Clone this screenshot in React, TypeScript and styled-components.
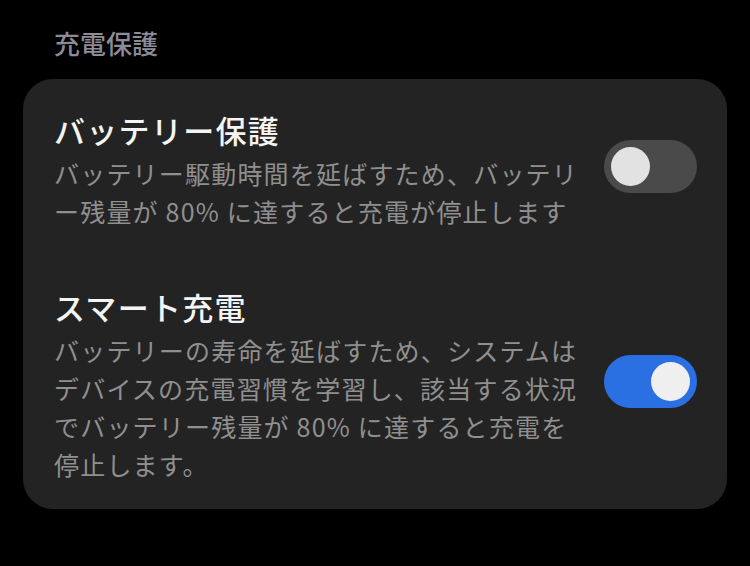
import { createGlobalStyle } from "styled-components";
import styled from "styled-components";

const GlobalStyle = createGlobalStyle`
	html, body
	{
		margin: 0;
		padding: 0;
		background-color: #000000;
	}

	body
	{
		font-family: "Noto Sans CJK JP", "Noto Sans", sans-serif;
		-webkit-font-smoothing: antialiased;
	}
`

const Page = styled.div`
	width: 750px;
	height: 566px;
	box-sizing: border-box;
	padding: 25px 23px 0 23px;
	background-color: #000000;
`

const SectionHeader = styled.div`
	padding-left: 31px;
	font-size: 26px;
	line-height: 36px;
	font-weight: 500;
	color: #8b8b99;
`

const Card = styled.div`
	margin-top: 18px;
	display: flex;
	flex-direction: column;
	gap: 57px;

	padding: 31px 30px 26px 31px;
	border-radius: 30px;

	background-color: #232323;
`

const SettingRow = styled.div`
	display: flex;
	align-items: center;
	gap: 20px;
`

const SettingText = styled.div`
	flex: 1;
	min-width: 0;
`

const SettingTitle = styled.div`
	font-size: 31px;
	line-height: 40px;
	font-weight: 500;
	letter-spacing: 1.3px;
	color: #f4f4f4;
`

const SettingDescription = styled.div`
	margin-top: 4px;
	font-size: 25px;
	line-height: 38px;
	letter-spacing: 1.2px;
	color: #8f8f8f;
	white-space: nowrap;
`

const ToggleTrack = styled.div<{ checked: boolean }>`
	position: relative;
	flex: none;
	width: 93px;
	height: 53px;
	margin-bottom: 8px;
	border-radius: 27px;

	background-color: ${({ checked }) => checked ? "#2b70e2" : "#4a4a4a"};
`

const ToggleKnob = styled.div<{ checked: boolean }>`
	position: absolute;
	top: 7px;
	left: ${({ checked }) => checked ? "47px" : "7px"};
	width: 39px;
	height: 39px;
	border-radius: 50%;

	background-color: ${({ checked }) => checked ? "#efefef" : "#e2e2e2"};
`

interface ToggleProps
{
	checked: boolean
}

function Toggle({ checked }: ToggleProps)
{
	return (
		<ToggleTrack checked={checked}>
			<ToggleKnob checked={checked} />
		</ToggleTrack>
	)
}

interface SettingProps
{
	title: string
	lines: string[]
	checked: boolean
}

function Setting({ title, lines, checked }: SettingProps)
{
	return (
		<SettingRow>
			<SettingText>
				<SettingTitle>{title}</SettingTitle>
				<SettingDescription>
					{lines.map((line, i) => (
						<div key={i}>{line}</div>
					))}
				</SettingDescription>
			</SettingText>
			<Toggle checked={checked} />
		</SettingRow>
	)
}

export default function App()
{
	return (
		<Page>
			<GlobalStyle />
			<SectionHeader>充電保護</SectionHeader>
			<Card>
				<Setting
					title="バッテリー保護"
					lines={[
						"バッテリー駆動時間を延ばすため、バッテリ",
						"ー残量が 80% に達すると充電が停止します",
					]}
					checked={false}
				/>
				<Setting
					title="スマート充電"
					lines={[
						"バッテリーの寿命を延ばすため、システムは",
						"デバイスの充電習慣を学習し、該当する状況",
						"でバッテリー残量が 80% に達すると充電を",
						"停止します。",
					]}
					checked={true}
				/>
			</Card>
		</Page>
	)
}
